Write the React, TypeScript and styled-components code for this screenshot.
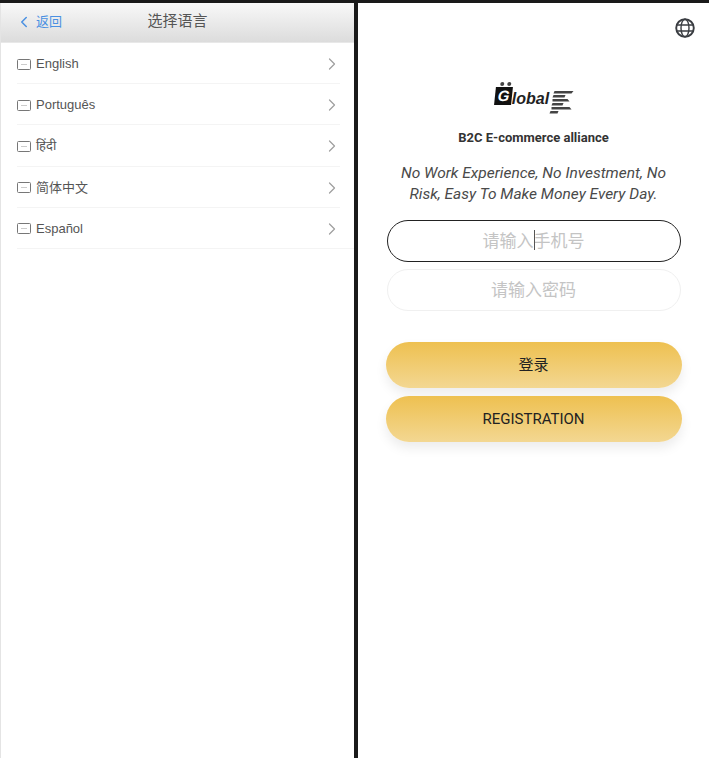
import React from "react";
import styled, { createGlobalStyle } from "styled-components";
import { FiChevronLeft, FiChevronRight } from "react-icons/fi";

const GlobalStyle = createGlobalStyle`
  html, body {
    margin: 0;
    padding: 0;
    background: #1a1a1a;
  }
  * { box-sizing: border-box; }
`;

const Frame = styled.div`
  width: 709px;
  height: 758px;
  padding-top: 3px;
  display: flex;
  gap: 4px;
  background: #1a1a1a;
  overflow: hidden;
`;

const LeftPanel = styled.div`
  width: 354px;
  flex: none;
  background: #fff;
  border-left: 1px solid #e4e4e4;
  font-family: "Liberation Sans", "Noto Sans CJK SC", sans-serif;
`;

const NavBar = styled.div`
  height: 40px;
  position: relative;
  display: flex;
  align-items: center;
  justify-content: center;
  background: linear-gradient(#f8f8f8, #dcdcdc);
  border-bottom: 1px solid #e8e8e8;
`;

const BackLink = styled.a`
  position: absolute;
  left: 14px;
  top: 10px;
  display: flex;
  align-items: center;
  gap: 3px;
  color: #4a90e2;
  font-size: 13px;
  line-height: 18px;
`;

const NavTitle = styled.div`
  font-size: 15px;
  color: #555;
  margin-top: -6px;
`;

const LangList = styled.div`
  display: flex;
  flex-direction: column;
`;

const LangRow = styled.div<{ $last?: boolean }>`
  height: 41.2px;
  margin-left: 16px;
  margin-right: ${(p) => (p.$last ? "0" : "14px")};
  padding-top: 2px;
  display: flex;
  align-items: center;
  gap: 5px;
  color: #555;
  font-size: 13px;
  border-bottom: 1px solid #f4f4f4;
  & > svg:last-child {
    margin-left: auto;
    margin-right: ${(p) => (p.$last ? "14px" : "0")};
    color: #a0a0a0;
    transform: translateX(2px);
  }
`;

const LangLabel = styled.span`
  line-height: 16px;
`;

const RightPanel = styled.div`
  flex: 1;
  background: #fff;
  display: flex;
  flex-direction: column;
  align-items: center;
  font-family: Roboto, "Noto Sans CJK SC", sans-serif;
`;

const GlobeButton = styled.div`
  align-self: flex-end;
  height: 20px;
  margin: 15px 14px 0 0;
  color: #3a3d42;
  line-height: 0;
`;

const Logo = styled.div`
  margin: 44px 0 0 2px;
  height: 34px;
  display: flex;
  align-items: flex-end;
  color: #222;
  font-family: "Liberation Sans", sans-serif;
  font-style: italic;
  font-weight: 700;
  font-size: 16px;
  line-height: 19px;
`;

const LogoMark = styled.span`
  position: relative;
  width: 17px;
  height: 18px;
  margin-bottom: 11px;
  background: #111;
  color: #fff;
  font-size: 15px;
  line-height: 18px;
  text-align: center;
  transform: skewX(-6deg);
  &::before {
    content: "";
    position: absolute;
    top: -5px;
    left: 4px;
    width: 4px;
    height: 4px;
    border-radius: 50%;
    background: #444;
    box-shadow: 7px 0 0 #444;
  }
`;

const LogoWord = styled.span`
  margin-bottom: 8px;
`;

const Slogan = styled.div`
  margin-top: 12px;
  font-size: 13px;
  font-weight: 700;
  line-height: 20px;
  color: #333;
`;

const Tagline = styled.div`
  width: 280px;
  margin-top: 15px;
  font-size: 15.5px;
  font-style: italic;
  line-height: 21px;
  text-align: center;
  color: #4a4a4a;
`;

const Form = styled.div`
  width: 296px;
  margin-top: 15px;
  display: flex;
  flex-direction: column;
  align-items: center;
`;

const Field = styled.div<{ $active?: boolean }>`
  position: relative;
  width: 294px;
  height: 42px;
  margin-bottom: 7px;
  padding-bottom: 4px;
  border-radius: 21px;
  border: 1px solid ${(p) => (p.$active ? "#222" : "#f0f0f0")};
  display: flex;
  align-items: center;
  justify-content: center;
  color: #c4c4c4;
  font-size: 17px;
`;

const Caret = styled.span`
  position: absolute;
  left: 146px;
  top: 9px;
  width: 1px;
  height: 20px;
  background: #555;
`;

const ButtonStack = styled.div`
  margin-top: 24px;
  display: flex;
  flex-direction: column;
  gap: 8px;
`;

const ActionButton = styled.div<{ $cjk?: boolean }>`
  width: 296px;
  height: 46px;
  padding-bottom: ${(p) => (p.$cjk ? "4px" : "0")};
  border-radius: 23px;
  background: linear-gradient(#eec050, #f3d792);
  box-shadow: 0 6px 12px rgba(0, 0, 0, 0.08);
  display: flex;
  align-items: center;
  justify-content: center;
  color: #222;
  font-size: 15px;
`;

const GlobeIcon = () => (
  <svg width="20" height="20" viewBox="0 0 20 20" fill="none" stroke="currentColor">
    <circle cx="10" cy="10" r="8.8" strokeWidth="1.9" />
    <ellipse cx="10" cy="10" rx="4" ry="8.8" strokeWidth="1.4" />
    <path d="M1.8 7h16.4M1.8 13h16.4" strokeWidth="1.4" />
  </svg>
);

const LogoLines = () => (
  <svg width="25" height="24" viewBox="0 0 24 24" style={{ marginBottom: 2 }}>
    <g fill="#444">
      <polygon points="5,1 24,1 22,3.5 4,3.5" />
      <polygon points="4,5 16,5 15,7.5 3,7.5" />
      <polygon points="3,9 18,9 20,11.5 3,11.5" />
      <polygon points="3,13 14,13 13,15.5 2,15.5" />
      <polygon points="2,17 20,17 22,19.5 2,19.5" />
      <polygon points="1,21 9,21 8,23.5 0,23.5" />
    </g>
  </svg>
);

const FlagIcon = () => (
  <svg width="14" height="11" viewBox="0 0 14 11" fill="none">
    <rect x="0.5" y="0.5" width="13" height="10" rx="1" stroke="#777" />
    <path d="M4.5 5.5h5" stroke="#999" strokeDasharray="1 1" />
  </svg>
);

const languages = ["English", "Português", "हिंदी", "简体中文", "Español"];

export default function App() {
  return (
    <Frame>
      <GlobalStyle />
      <LeftPanel>
        <NavBar>
          <BackLink>
            <FiChevronLeft size={18} />
            返回
          </BackLink>
          <NavTitle>选择语言</NavTitle>
        </NavBar>
        <LangList>
          {languages.map((name, i) => (
            <LangRow key={name} $last={i === languages.length - 1}>
              <FlagIcon />
              <LangLabel>{name}</LangLabel>
              <FiChevronRight size={20} strokeWidth={1.5} />
            </LangRow>
          ))}
        </LangList>
      </LeftPanel>
      <RightPanel>
        <GlobeButton>
          <GlobeIcon />
        </GlobeButton>
        <Logo>
          <LogoMark>G</LogoMark>
          <LogoWord>lobal</LogoWord>
          <LogoLines />
        </Logo>
        <Slogan>B2C E-commerce alliance</Slogan>
        <Tagline>No Work Experience, No Investment, No Risk, Easy To Make Money Every Day.</Tagline>
        <Form>
          <Field $active>
            请输入手机号
            <Caret />
          </Field>
          <Field>请输入密码</Field>
          <ButtonStack>
            <ActionButton $cjk>登录</ActionButton>
            <ActionButton>REGISTRATION</ActionButton>
          </ButtonStack>
        </Form>
      </RightPanel>
    </Frame>
  );
}
